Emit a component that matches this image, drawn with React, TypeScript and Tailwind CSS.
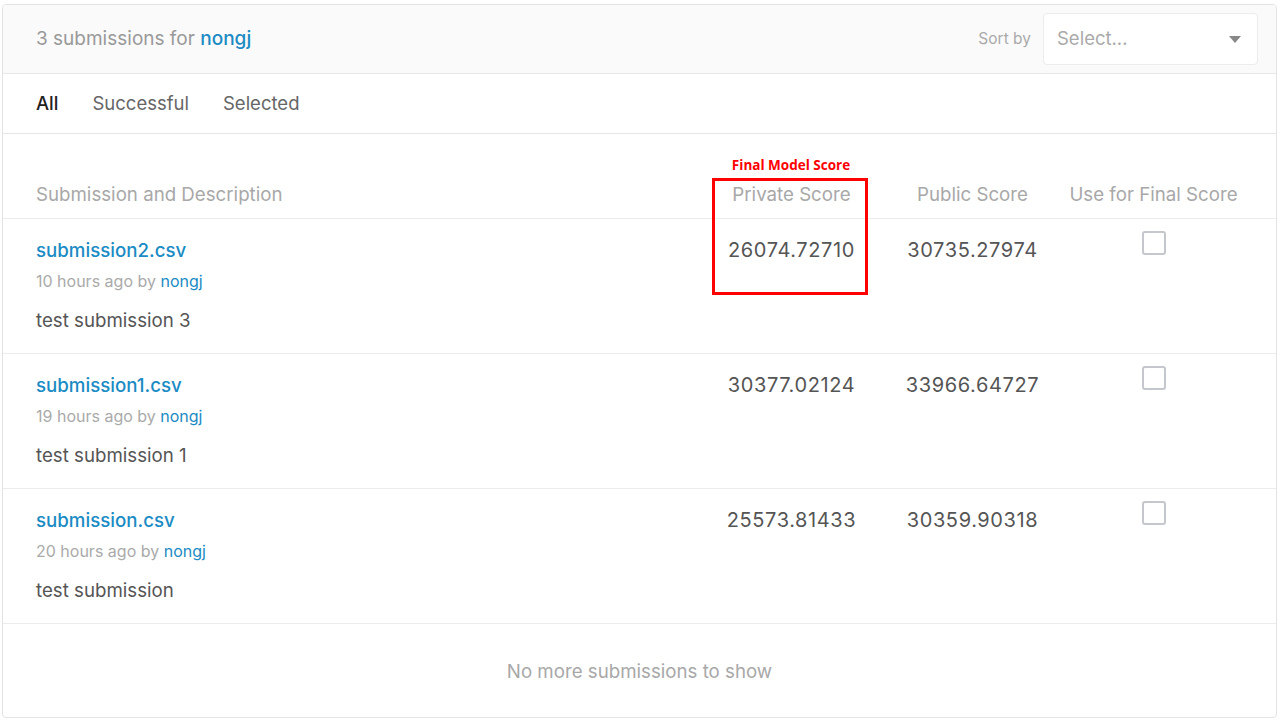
import React from 'react';

const rows = [
  { file: 'submission2.csv', ago: '10 hours ago', desc: 'test submission 3', priv: '26074.72710', pub: '30735.27974' },
  { file: 'submission1.csv', ago: '19 hours ago', desc: 'test submission 1', priv: '30377.02124', pub: '33966.64727' },
  { file: 'submission.csv', ago: '20 hours ago', desc: 'test submission', priv: '25573.81433', pub: '30359.90318' },
];

const cols = 'grid grid-cols-[1fr_181px_181px_181px] pl-[33px] pr-[32px]';

export default function App() {
  return (
    <div className="w-[1280px] h-[720px] bg-white pt-[4px] pl-[2px] pr-[3px] pb-[2px]" style={{ fontFamily: 'Inter, "Noto Sans", sans-serif' }}>
      <div className="relative h-full border border-[#e3e3e3] rounded-[4px] flex flex-col overflow-hidden">
        {/* header */}
        <div className="h-[69px] shrink-0 bg-[#fafafa] border-b border-[#e8e8e8] flex items-center justify-between pl-[33px] pr-[18px]">
          <div className="text-[19px] text-[#999]">
            3 submissions for <span className="text-[#1a8bc4] font-medium">nongj</span>
          </div>
          <div className="flex items-center gap-[12px]">
            <span className="text-[15.5px] text-[#aaa]">Sort by</span>
            <div className="w-[215px] h-[52px] bg-white border border-[#ececec] rounded-[4px] flex items-center justify-between pl-[13px] pr-[16px]">
              <span className="text-[18.5px] text-[#aaa]">Select...</span>
              <svg width="12" height="7" viewBox="0 0 12 7"><path d="M0 0h12L6 7z" fill="#888" /></svg>
            </div>
          </div>
        </div>

        {/* tabs */}
        <div className="h-[60px] shrink-0 border-b border-[#e6e6e6] flex items-center gap-[34px] pl-[33px] text-[18.5px]">
          <span className="text-[#222] font-medium">All</span>
          <span className="text-[#666]">Successful</span>
          <span className="text-[#666]">Selected</span>
        </div>

        {/* table header */}
        <div className={`${cols} h-[85px] shrink-0 border-b border-[#ececec] items-end pb-[9px] text-[18.7px] text-[#a8a8a8]`}>
          <div>Submission and Description</div>
          <div className="text-center">Private Score</div>
          <div className="text-center">Public Score</div>
          <div className="text-center">Use for Final Score</div>
        </div>

        {rows.map((r) => (
          <div key={r.file} className={`${cols} h-[135px] shrink-0 border-b border-[#ececec] pt-[19px]`}>
            <div>
              <div className="text-[18.7px] text-[#1a8bc4] font-medium leading-[25px]">{r.file}</div>
              <div className="text-[16px] text-[#aaa] leading-[22px] mt-[7px]">
                {r.ago} by <span className="text-[#1a8bc4]">nongj</span>
              </div>
              <div className="text-[18.7px] text-[#555] leading-[24px] mt-[17px]">{r.desc}</div>
            </div>
            <div className="text-center text-[20px] text-[#555] leading-[25px] tracking-[0.6px]">{r.priv}</div>
            <div className="text-center text-[20px] text-[#555] leading-[25px] tracking-[0.6px]">{r.pub}</div>
            <div className="flex justify-center">
              <div className="w-[24px] h-[24px] border-2 border-[#c4c7cc] rounded-[3px] -mt-[7px]" />
            </div>
          </div>
        ))}

        {/* footer */}
        <div className="flex-1 flex items-center justify-center pt-[4px] text-[18.7px] text-[#a8a8a8]">
          No more submissions to show
        </div>

        {/* annotation */}
        <div className="absolute left-[709px] top-[173px] w-[156px] h-[117px] border-[3px] border-[#ff0000]" />
        <div className="absolute left-[703px] top-[150px] w-[170px] text-center text-[13.5px] font-bold text-[#ff0000]" style={{ fontFamily: '"Open Sans", sans-serif' }}>
          Final Model Score
        </div>
      </div>
    </div>
  );
}
